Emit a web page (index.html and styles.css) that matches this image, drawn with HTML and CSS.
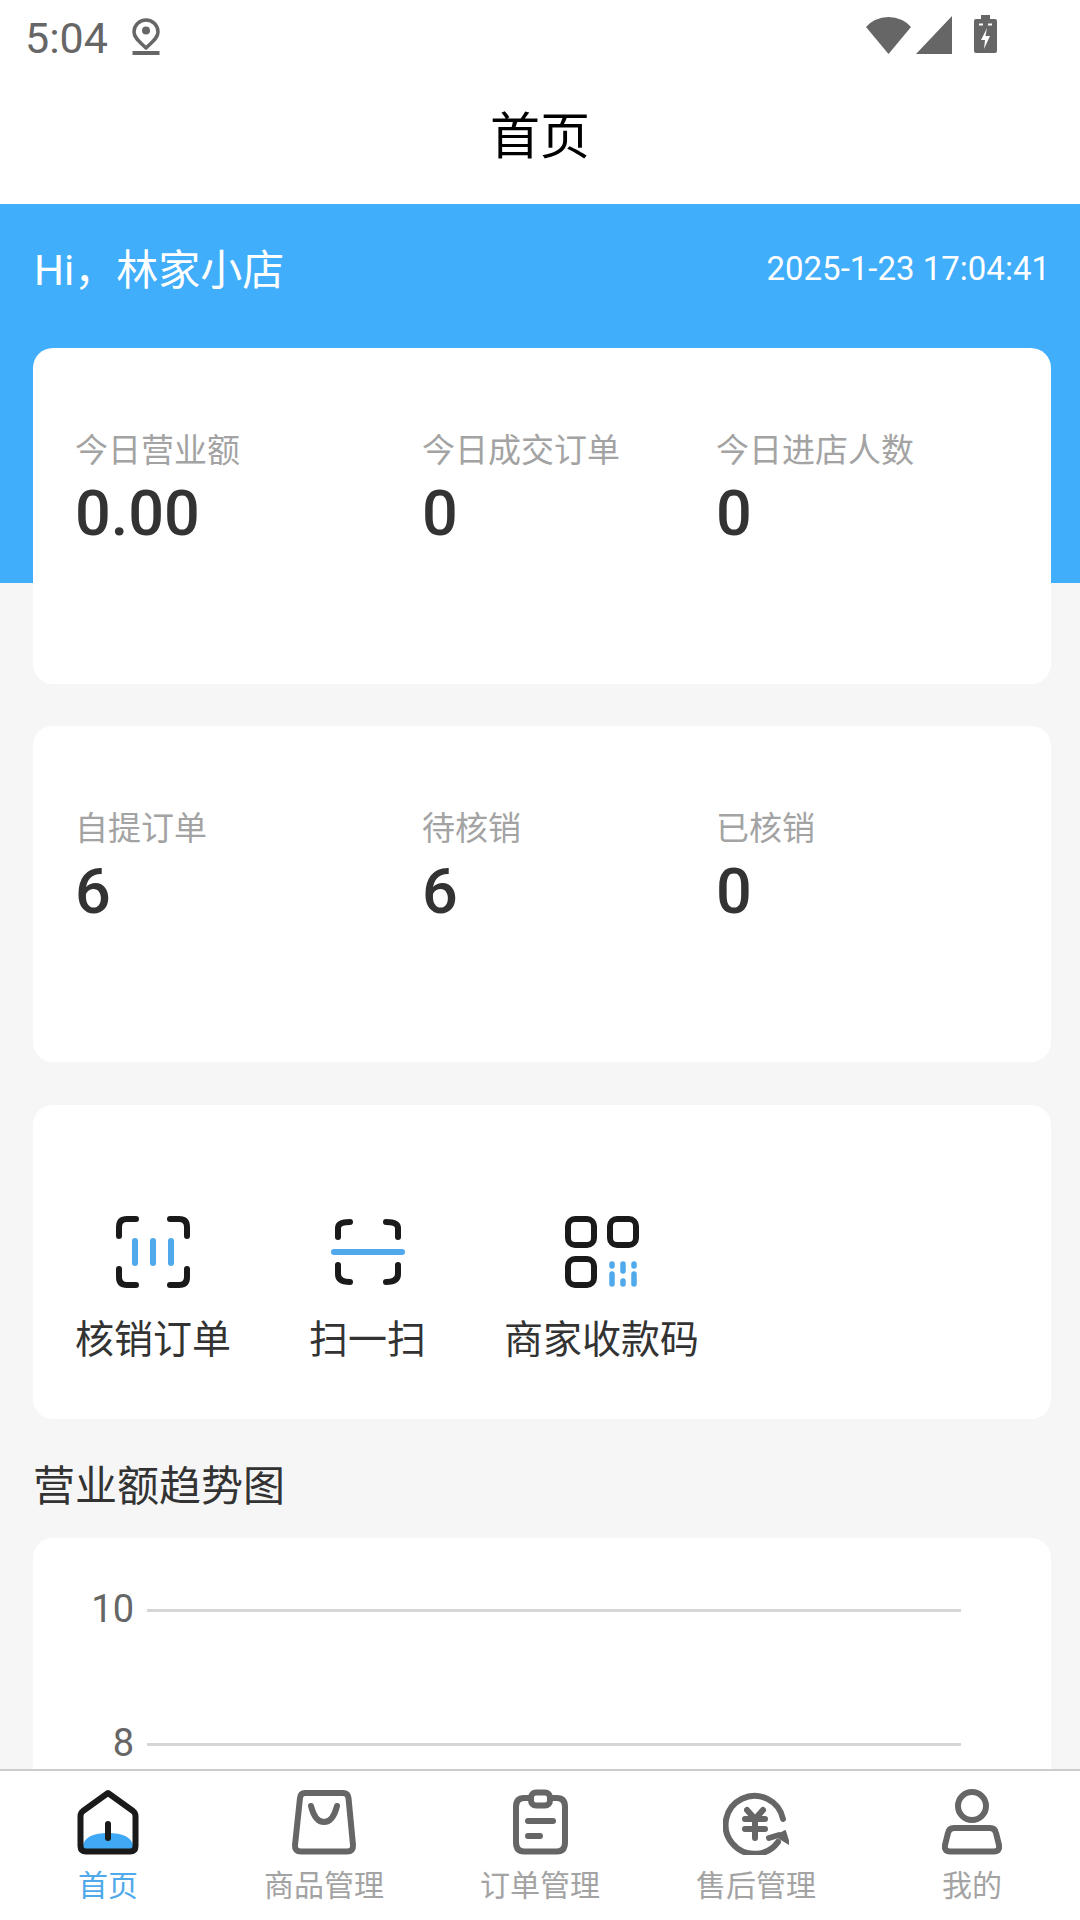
FILE: index.html
```html
<!DOCTYPE html>
<html lang="zh-CN">
<head>
<meta charset="UTF-8">
<meta name="viewport" content="width=device-width, initial-scale=1.0">
<title>首页</title>
<link rel="stylesheet" href="styles.css">
</head>
<body>
<div class="screen">
  <div class="status">
    <div class="status-left">
      <span class="clock">5:04</span>
      <svg class="pin" viewBox="0 0 28 38"><path d="M14 2a12 12 0 0 1 12 12c0 6-6 10-12 16C8 24 2 20 2 14A12 12 0 0 1 14 2z" fill="none" stroke="#666" stroke-width="3.500" stroke-linejoin="round"/><circle cx="14" cy="12.500" r="4" fill="#666"/><rect x="0.500" y="33" width="27" height="4" fill="#666"/></svg>
    </div>
    <div class="status-right">
      <svg class="wifi" viewBox="0 0 45 38"><path d="M22.500 38L0 11Q3 7 9 4Q22.500 -2 36 4Q42 7 45 11z" fill="#666"/></svg>
      <svg class="signal" viewBox="0 0 36 38"><path d="M36 0V38H0z" fill="#666"/></svg>
      <svg class="battery" viewBox="0 0 23 38"><path d="M7 0h9v4h5q2 0 2 2v30q0 2-2 2H2q-2 0-2-2V6q0-2 2-2h5z" fill="#666"/><path d="M13 13L7 25h4l-1 9L16 21h-4.500z" fill="#fff"/><path d="M5 9.500h4M14 9.500h4" stroke="#fff" stroke-width="2"/></svg>
    </div>
  </div>
  <header class="navbar">首页</header>

  <main class="content">
    <section class="hero">
      <div class="hi">Hi，林家小店</div>
      <div class="now">2025-1-23 17:04:41</div>
    </section>

    <div class="cards">
      <section class="card stats">
        <div class="stat"><p class="stat-label">今日营业额</p><p class="stat-num">0.00</p></div>
        <div class="stat"><p class="stat-label">今日成交订单</p><p class="stat-num">0</p></div>
        <div class="stat"><p class="stat-label">今日进店人数</p><p class="stat-num">0</p></div>
      </section>

      <section class="card stats">
        <div class="stat"><p class="stat-label">自提订单</p><p class="stat-num">6</p></div>
        <div class="stat"><p class="stat-label">待核销</p><p class="stat-num">6</p></div>
        <div class="stat"><p class="stat-label">已核销</p><p class="stat-num">0</p></div>
      </section>

      <section class="card tools">
        <div class="tool">
          <svg class="tool-icon" width="74" height="72" viewBox="0 0 74 72" fill="none" stroke-linecap="round" stroke-width="6">
            <path d="M3 20V11Q3 3 11 3H20M54 3H63Q71 3 71 11V20M71 53V61Q71 69 63 69H54M20 69H11Q3 69 3 61V53" stroke="#1a1a1a"/>
            <path d="M19 25V47M37 25V47M55 25V47" stroke="#4fa9ea"/>
          </svg>
          <span>核销订单</span>
        </div>
        <div class="tool">
          <svg class="tool-icon" width="74" height="72" viewBox="0 0 74 72" fill="none" stroke-linecap="round" stroke-width="6">
            <path d="M7 21V12Q7 6 19 6M55 6Q67 6 67 12V21M67 49V58Q67 66 55 66M19 66Q7 66 7 58V49" stroke="#1a1a1a"/>
            <path d="M3 36H71" stroke="#4fa9ea"/>
          </svg>
          <span>扫一扫</span>
        </div>
        <div class="tool">
          <svg class="tool-icon" width="74" height="72" viewBox="0 0 74 72" fill="none" stroke-linecap="round" stroke-width="6">
            <rect x="3" y="3" width="26" height="26" rx="7" stroke="#1a1a1a"/>
            <rect x="45" y="3" width="26" height="26" rx="7" stroke="#1a1a1a"/>
            <rect x="3" y="43" width="26" height="26" rx="7" stroke="#1a1a1a"/>
            <path d="M47 48V50M47 58V68M58 48V55M58 65V68M69 48V50M69 58V68" stroke="#4fa9ea" stroke-width="5.500"/>
          </svg>
          <span>商家收款码</span>
        </div>
      </section>

      <h2 class="chart-title">营业额趋势图</h2>

      <section class="card chart">
        <div class="chart-row"><span class="tick">10</span><i class="grid-line"></i></div>
        <div class="chart-row"><span class="tick">8</span><i class="grid-line"></i></div>
      </section>
    </div>
  </main>

  <nav class="tabbar">
    <a class="tab tab-on">
      <svg class="tab-icon" viewBox="0 0 66 66" fill="none" stroke="#1a1a1a" stroke-width="6" stroke-linecap="round" stroke-linejoin="round">
        <path d="M8 56Q11 44 33 44Q55 44 58 56V62H8z" fill="#3fa9f5" stroke="none"/>
        <path d="M33 4L58 22Q60.500 24 60.500 27V57Q60.500 62.500 55 62.500H11Q5.500 62.500 5.500 57V27Q5.500 24 8 22z"/>
        <path d="M33 35V49"/>
      </svg>
      <span>首页</span>
    </a>
    <a class="tab">
      <svg class="tab-icon" viewBox="0 0 66 66" fill="none" stroke="#666" stroke-width="6" stroke-linecap="round" stroke-linejoin="round">
        <path d="M14 4H52Q57 4 57.500 9L62 56Q62.500 62.500 56 62.500H10Q3.500 62.500 4 56L9 9Q9.500 4 14 4z"/>
        <path d="M20 17Q24 33 33 33Q42 33 46 17"/>
      </svg>
      <span>商品管理</span>
    </a>
    <a class="tab">
      <svg class="tab-icon" viewBox="0 0 66 66" fill="none" stroke="#666" stroke-width="6" stroke-linecap="round" stroke-linejoin="round">
        <path d="M24 9H17Q9 9 9 18V53Q9 62.500 17 62.500H50Q58 62.500 58 53V18Q58 9 50 9H43"/>
        <rect x="24" y="3.500" width="19" height="13" rx="5"/>
        <path d="M21 32H46M21 47H33"/>
      </svg>
      <span>订单管理</span>
    </a>
    <a class="tab">
      <svg class="tab-icon" viewBox="0 0 66 66" fill="none" stroke="#666" stroke-width="6" stroke-linecap="round" stroke-linejoin="round">
        <path d="M60 30A29 29 0 1 0 55 53"/>
        <path d="M53 47L62 42L66 55z" fill="#666" stroke-width="2"/>
        <path d="M46 49L56 46"/>
        <path d="M24 21L32 30L40 21M22 30H42M22 40H42M32 30V49"/>
      </svg>
      <span>售后管理</span>
    </a>
    <a class="tab">
      <svg class="tab-icon" viewBox="0 0 66 66" fill="none" stroke="#666" stroke-width="6" stroke-linecap="round" stroke-linejoin="round">
        <circle cx="33" cy="17" r="14"/>
        <path d="M15 39H51Q56 39 57 44L60 56Q61 62.500 55 62.500H11Q5 62.500 6 56L9 44Q10 39 15 39z"/>
      </svg>
      <span>我的</span>
    </a>
  </nav>
</div>
</body>
</html>
```

FILE: styles.css
```css
* {
  box-sizing: border-box;
}
html, body {
  margin: 0;
  padding: 0;
}
body {
  font-family: Roboto, "Noto Sans CJK SC", sans-serif;
  background: #f6f6f6;
}
.screen {
  width: 1080px;
  height: 1920px;
  display: flex;
  flex-direction: column;
  overflow: hidden;
}

/* status bar + title */
.status {
  height: 72px;
  flex: none;
  background: #fff;
  display: flex;
  justify-content: space-between;
  padding: 15px 83px 0 25px;
}
.status-left, .status-right {
  display: flex;
  align-items: flex-start;
}
.clock {
  font-size: 43px;
  line-height: 46px;
  color: #666;
}
.pin {
  width: 28px;
  height: 38px;
  margin: 3px 0 0 24px;
}
.wifi {
  width: 45px;
  height: 38px;
  margin-top: 1px;
}
.signal {
  width: 36px;
  height: 38px;
  margin: 1px 0 0 5px;
}
.battery {
  width: 23px;
  height: 38px;
  margin-left: 22px;
}
.navbar {
  height: 132px;
  flex: none;
  background: #fff;
  color: #000;
  font-size: 50px;
  line-height: 130px;
  text-align: center;
}

.content {
  flex: 1;
  min-height: 0;
  overflow: hidden;
}
.hero {
  height: 379px;
  background: #40aefb;
  color: #fff;
  display: flex;
  justify-content: space-between;
  align-items: flex-start;
  padding: 40px 30px 0 34px;
}
.hi {
  font-size: 42px;
  line-height: 54px;
}
.now {
  font-size: 33px;
  line-height: 50px;
}

.cards {
  margin-top: -235px;
  padding: 0 29px 0 33px;
  display: flex;
  flex-direction: column;
}
.card {
  background: #fff;
  border-radius: 20px;
}
.stats {
  height: 336px;
  margin-bottom: 42px;
  padding: 80px 0 0 42px;
  display: grid;
  grid-template-columns: 347px 294px 1fr;
}
.stat-label {
  margin: 0;
  font-size: 33px;
  line-height: 46px;
  color: #a3a3a3;
}
.stat-num {
  margin: 1px 0 0;
  font-size: 63px;
  line-height: 78px;
  font-weight: 500;
  color: #333;
}

.tools {
  height: 314px;
  padding: 111px 0 0 42px;
  display: flex;
  gap: 78px;
  margin-top: 1px;
}
.tool {
  display: flex;
  flex-direction: column;
  align-items: center;
  font-size: 39px;
  line-height: 56px;
  color: #333;
}
.tool-icon {
  margin-bottom: 24px;
}

.chart-title {
  margin: 0;
  padding-top: 40px;
  height: 119px;
  font-size: 42px;
  line-height: 56px;
  font-weight: 400;
  color: #333;
}
.chart {
  height: 400px;
  padding-top: 49px;
}
.chart-row {
  display: flex;
  align-items: center;
  height: 44px;
  margin-bottom: 90px;
}
.tick {
  width: 101px;
  text-align: right;
  font-size: 38px;
  color: #666;
}
.grid-line {
  display: block;
  width: 814px;
  height: 3px;
  margin-left: 13px;
  margin-top: 3px;
  background: #d6d6d6;
}

/* bottom tabs */
.tabbar {
  flex: none;
  height: 151px;
  background: #fff;
  border-top: 2px solid #ccc;
  display: grid;
  grid-template-columns: repeat(5, 1fr);
}
.tab {
  display: flex;
  flex-direction: column;
  align-items: center;
  padding-top: 18px;
  font-size: 30px;
  line-height: 40px;
  color: #a3a3a3;
}
.tab-on {
  color: #4fa9ea;
}
.tab-icon {
  width: 66px;
  height: 66px;
  margin-bottom: 11px;
}
```
